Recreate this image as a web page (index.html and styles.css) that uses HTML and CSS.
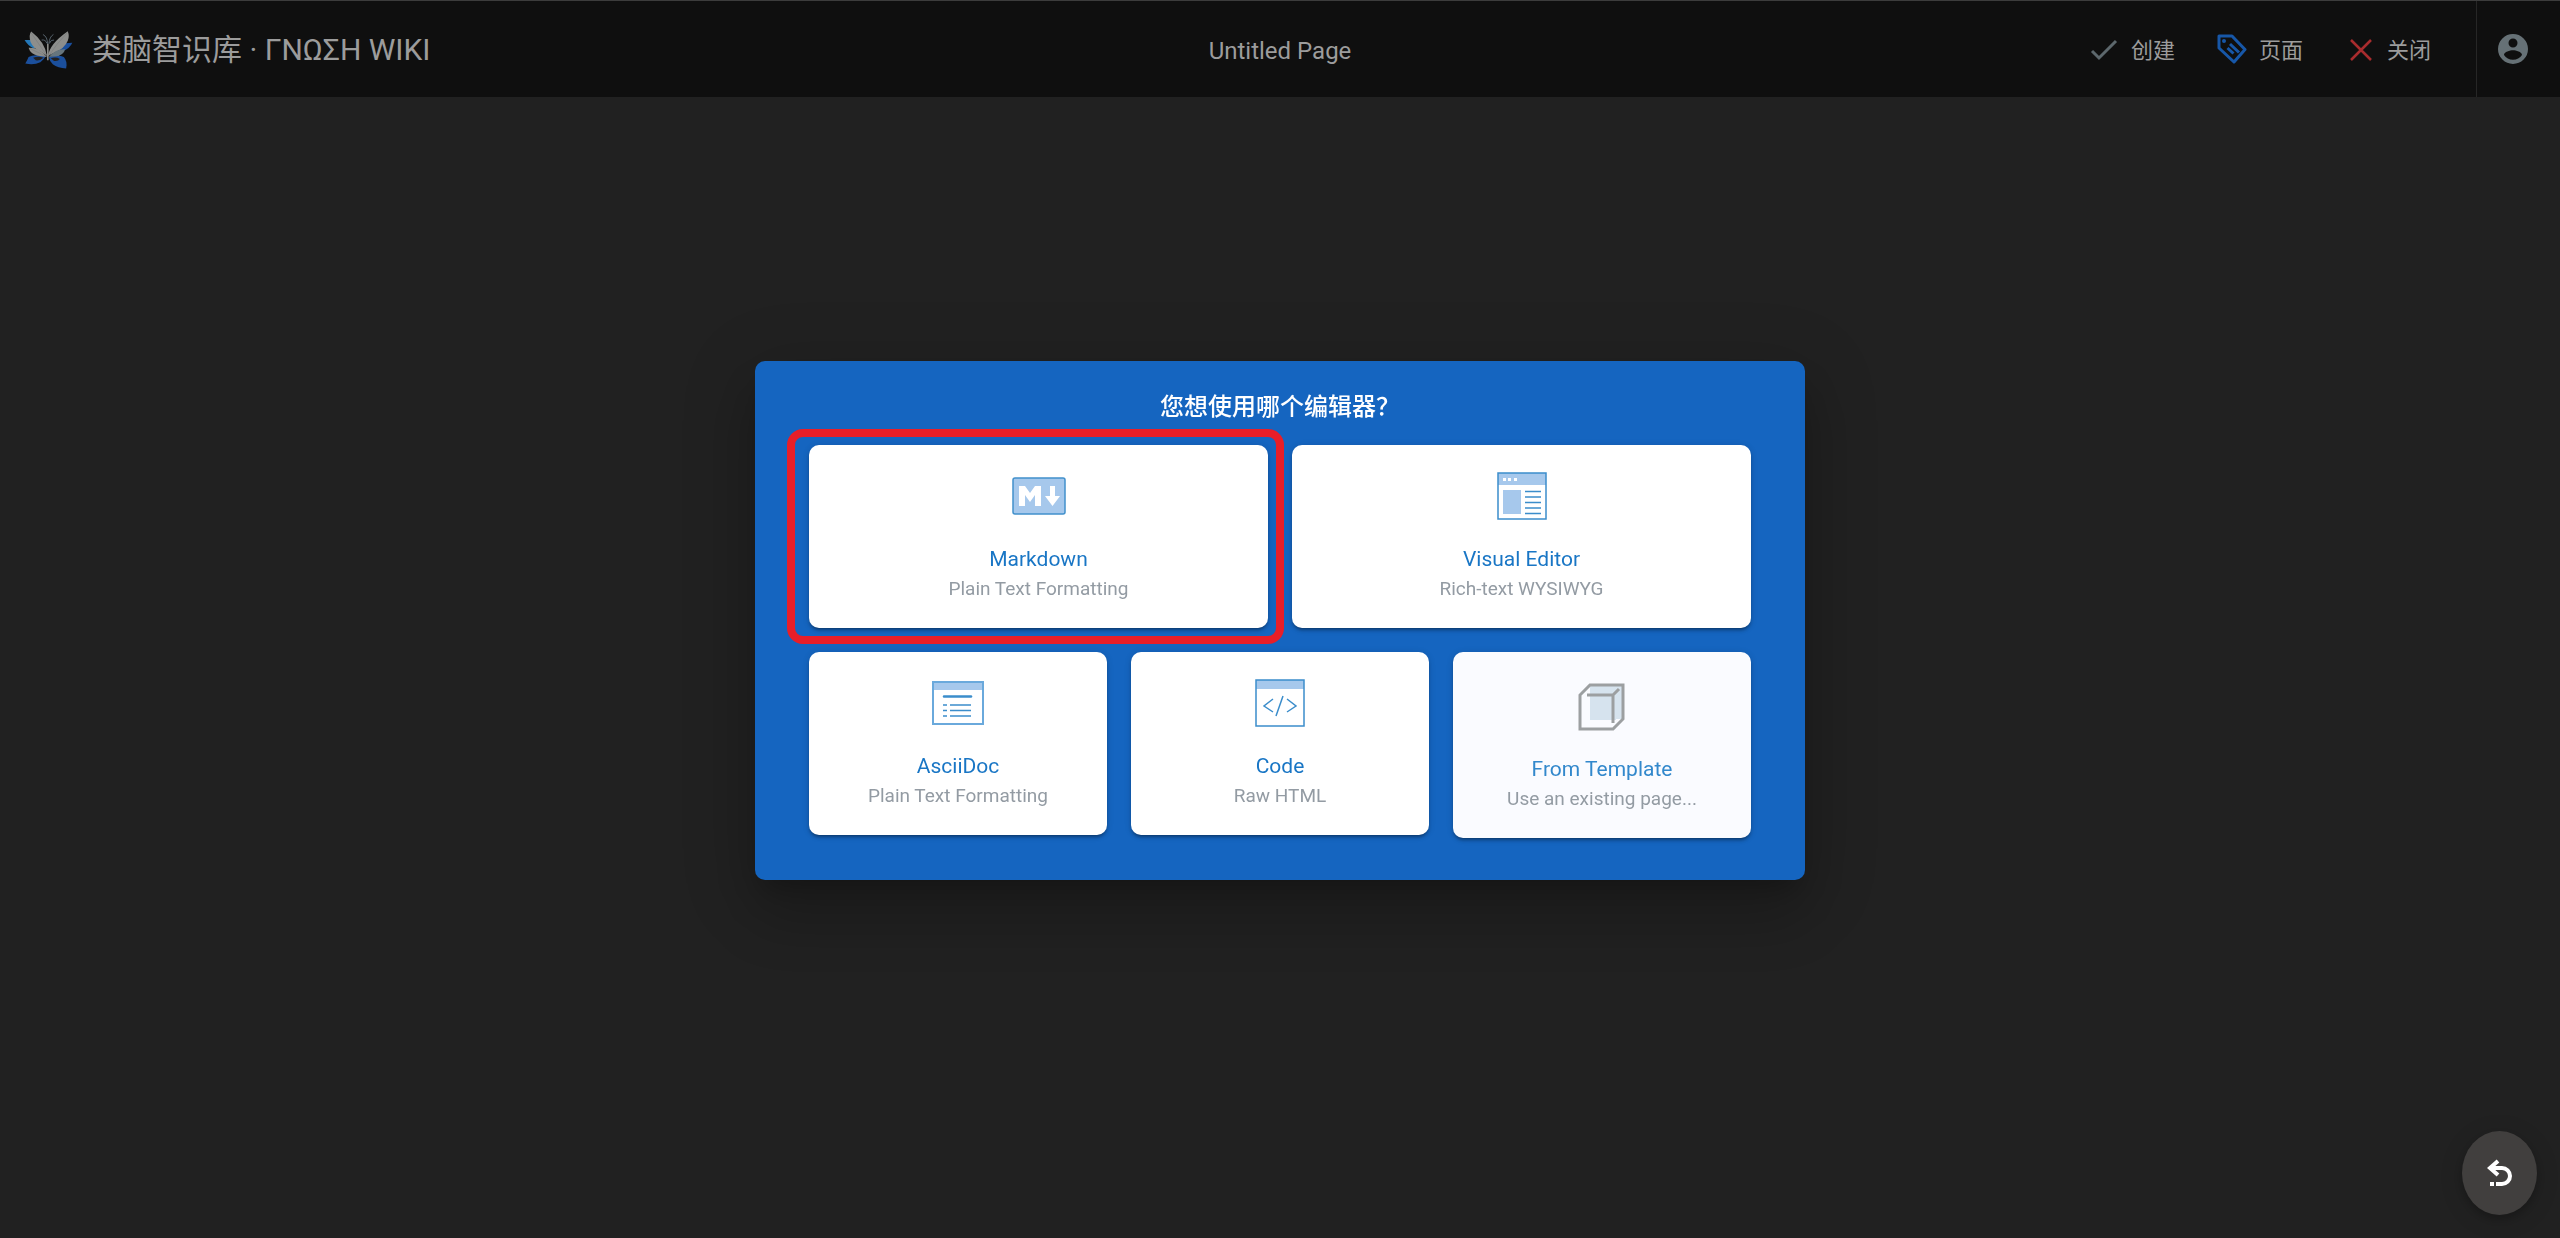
FILE: index.html
```html
<!DOCTYPE html>
<html lang="zh-CN">
<head>
<meta charset="utf-8">
<meta name="viewport" content="width=device-width, initial-scale=1">
<title>Untitled Page</title>
<link rel="stylesheet" href="styles.css">
</head>
<body>
<header class="topbar">
  <a class="brand" href="#">
    <svg class="brand-logo" viewBox="0 0 150 118" aria-hidden="true">
      <g fill="#1b4f9c">
        <path d="M2 30 L24 30 L44 52 L30 56 Q10 46 2 30Z" fill="#2478b8"/>
        <path d="M148 38 L126 40 L102 60 L118 64 Q140 56 148 38Z"/>
        <path d="M66 80 Q30 72 14 82 Q10 92 4 102 Q30 108 50 98 Q62 90 66 80Z"/>
        <path d="M76 82 Q106 74 122 82 Q134 96 129 117 Q104 116 88 104 Q78 94 76 82Z"/>
      </g>
      <g fill="#22201f"><path d="M28 84 Q44 78 60 84 Q48 94 36 92Z"/><path d="M82 86 Q98 80 110 88 Q104 96 92 94Z"/></g>
      <g fill="#8d8e8c">
        <path d="M70 78 Q64 36 22 4 Q14 14 20 36 Q30 58 52 66Z"/>
        <path d="M74 78 Q78 42 134 3 Q140 18 134 32 Q124 56 94 68Z"/>
        <path d="M70 82 Q46 52 14 54 Q20 74 42 78Z"/>
        <path d="M76 82 Q96 56 126 58 Q122 74 100 80Z" fill="#66757d"/>
      </g>
      <path d="M22 8 Q44 40 70 78 M132 8 Q96 46 76 78 M18 56 L68 80" fill="none" stroke="#7b7d7c" stroke-width="2"/>
      <path d="M72 42 Q72 20 58 13 M76 42 Q78 20 90 13 M70 40 Q66 28 54 30 M78 40 Q82 28 92 30" fill="none" stroke="#56626c" stroke-width="3"/>
      <path d="M73 42 V92" stroke="#a9aaa6" stroke-width="4"/>
    </svg>
    <span class="brand-name">类脑智识库 · ΓΝΩΣΗ WIKI</span>
  </a>
  <h1 class="page-name">Untitled Page</h1>
  <div class="tools">
    <div class="actions">
      <button class="action" type="button">
        <svg class="action-icon" viewBox="0 0 30 30" fill="none" stroke="#5d686d" stroke-width="3" aria-hidden="true"><path d="M3 17l7 7L27 7"/></svg>
        <span>创建</span>
      </button>
      <button class="action" type="button">
        <svg class="action-icon" viewBox="0 0 30 30" fill="none" stroke="#1757a8" stroke-width="3" stroke-linejoin="round" aria-hidden="true"><path d="M2 2h13l13 13.500L17 28 2 14Z"/><path d="M13 10l9 8.500M10.500 14l6 5.500"/><circle cx="7" cy="7" r="2" fill="#1757a8" stroke="none"/></svg>
        <span>页面</span>
      </button>
      <button class="action" type="button">
        <svg class="action-icon" viewBox="0 0 30 30" fill="none" stroke="#a82c2e" stroke-width="2.500" aria-hidden="true"><path d="M6 6l20 20M26 6L6 26"/></svg>
        <span>关闭</span>
      </button>
    </div>
    <button class="account" type="button" aria-label="Account">
      <svg class="action-icon" viewBox="2 2 20 20" fill="#667176" aria-hidden="true"><path d="M12 19.200c-2.500 0-4.710-1.280-6-3.200.03-2 4-3.100 6-3.100s5.970 1.100 6 3.100a7.232 7.232 0 0 1-6 3.200M12 5a3 3 0 0 1 3 3 3 3 0 0 1-3 3 3 3 0 0 1-3-3 3 3 0 0 1 3-3m0-3A10 10 0 0 0 2 12a10 10 0 0 0 10 10 10 10 0 0 0 10-10A10 10 0 0 0 12 2Z"/></svg>
    </button>
  </div>
</header>

<main class="overlay">
  <section class="dialog" role="dialog" aria-labelledby="dialog-title">
    <h2 class="dialog-title" id="dialog-title">您想使用哪个编辑器？</h2>
    <div class="row">
      <button class="card card-marked" type="button">
        <span class="card-icon">
          <svg width="54" height="38" viewBox="0 0 54 38" aria-hidden="true"><rect x="1" y="1" width="52" height="36" rx="2" fill="#a6c8ec" stroke="#4190cb" stroke-width="1.500"/><path d="M7 29V9h6l5 7 5-7h6v20h-6V18l-5 7-5-7v11ZM38 9h5v10h5l-7.500 10L33 19h5Z" fill="#fff"/></svg>
        </span>
        <span class="card-name">Markdown</span>
        <span class="card-note">Plain Text Formatting</span>
      </button>
      <button class="card" type="button">
        <span class="card-icon">
          <svg width="50" height="48" viewBox="0 0 50 48" aria-hidden="true"><rect x="1" y="1" width="48" height="46" fill="#fff"/><path d="M1 1h48v12H1ZM6 18h18v24H6Z" fill="#a6c8ec"/><rect x="1" y="1" width="48" height="46" fill="none" stroke="#3b8dcb" stroke-width="1.500"/><path d="M6 6h3v3H6ZM11 6h3v3h-3ZM17 6h3v3h-3Z" fill="#fff"/><path d="M28 19.500h16M28 25h16M28 30.500h16M28 36h16M28 41.500h16" stroke="#3b8dcb" stroke-width="1.500"/></svg>
        </span>
        <span class="card-name">Visual Editor</span>
        <span class="card-note">Rich-text WYSIWYG</span>
      </button>
    </div>
    <div class="row">
      <button class="card" type="button">
        <span class="card-icon">
          <svg width="52" height="44" viewBox="0 0 52 44" aria-hidden="true"><path d="M1 1h50v8H1Z" fill="#a6c8ec"/><rect x="1" y="1" width="50" height="42" fill="none" stroke="#6aa9dc" stroke-width="2"/><path d="M12 15.500h27" stroke="#3b8dcb" stroke-width="2.500" stroke-linecap="round"/><path d="M11 24h4M18 24h21M11 29.500h4M18 29.500h21M11 35h4M18 35h21" stroke="#3b8dcb" stroke-width="1.500"/></svg>
        </span>
        <span class="card-name">AsciiDoc</span>
        <span class="card-note">Plain Text Formatting</span>
      </button>
      <button class="card" type="button">
        <span class="card-icon">
          <svg width="50" height="48" viewBox="0 0 50 48" aria-hidden="true"><path d="M1 1h48v9H1Z" fill="#a6c8ec"/><rect x="1" y="1" width="48" height="46" fill="none" stroke="#3b8dcb" stroke-width="1.500"/><path d="M18 20l-9 7 9 6M32 20l9 7-9 6M28 17l-7 20" fill="none" stroke="#3b8dcb" stroke-width="1.500"/></svg>
        </span>
        <span class="card-name">Code</span>
        <span class="card-note">Raw HTML</span>
      </button>
      <button class="card card-template" type="button">
        <span class="card-icon">
          <svg width="48" height="48" viewBox="0 0 48 48" aria-hidden="true"><path d="M12 2h34v34h-8v1H12Z" fill="#d6e3ee"/><path d="M12 2h33v34L35 46H2V12Z M9 12h26v28M35 12l6-6" fill="none" stroke="#9c9fa1" stroke-width="3"/></svg>
        </span>
        <span class="card-name">From Template</span>
        <span class="card-note">Use an existing page...</span>
      </button>
    </div>
  </section>
</main>

<button class="fab" type="button" aria-label="Back">
  <svg width="26" height="28" viewBox="0 0 26 28" fill="none" stroke="#fff" stroke-width="4" aria-hidden="true"><path d="M11 2L3 9l8 7M3 9h12a8 8 0 0 1 0 16H9"/><path d="M3 23h4v4H3Z" fill="#fff" stroke="none"/></svg>
</button>
</body>
</html>
```
FILE: styles.css
```css
* {
  box-sizing: border-box;
}

body {
  margin: 0;
  min-height: 100vh;
  background: #212121;
  color: #9c9c9c;
  font-family: Roboto, "Noto Sans CJK SC", sans-serif;
}

button {
  border: 0;
  padding: 0;
  background: none;
  color: inherit;
  font: inherit;
  cursor: pointer;
}

svg {
  display: block;
  flex: none;
}

/* Top bar */

.topbar {
  display: grid;
  grid-template-columns: 1fr auto 1fr;
  align-items: center;
  height: 97px;
  border-top: 1px solid #3c3c3c;
  background: #0f0f0f;
}

.brand {
  display: flex;
  align-items: center;
  gap: 19px;
  padding-left: 24px;
  color: inherit;
  text-decoration: none;
}

.brand-logo {
  width: 49px;
  height: 39px;
}

.brand-name {
  padding-top: 2px;
  font-size: 30px;
  line-height: 40px;
  white-space: nowrap;
}

.page-name {
  margin: 0;
  padding-top: 3px;
  font-size: 24px;
  font-weight: 400;
  line-height: 40px;
}

.tools {
  display: flex;
  justify-content: flex-end;
  align-self: stretch;
}

.actions {
  display: flex;
  padding-right: 24px;
}

.action {
  display: flex;
  align-items: center;
  gap: 12px;
  padding: 0 21px;
  font-size: 22px;
  line-height: 30px;
}

.action-icon {
  width: 30px;
  height: 30px;
}

.action span {
  padding-top: 4px;
}

.account {
  padding: 0 32px 0 21px;
  border-left: 1px solid #262626;
}

/* Editor selection dialog */

.overlay {
  position: fixed;
  inset: 0;
  display: flex;
  align-items: center;
  justify-content: center;
  padding-top: 2px;
  pointer-events: none;
}

.dialog {
  width: 100%;
  max-width: 1050px;
  padding: 26px 54px 42px;
  border-radius: 10px;
  background: #1565c0;
  box-shadow: 0 16px 22px -10px rgba(0, 0, 0, .2), 0 36px 57px 4px rgba(0, 0, 0, .14), 0 14px 69px 12px rgba(0, 0, 0, .12);
  pointer-events: auto;
}

.dialog-title {
  margin: 0 0 18px;
  color: #fff;
  font-size: 24px;
  font-weight: 500;
  line-height: 40px;
  text-align: center;
}

.row {
  display: flex;
  align-items: flex-start;
  gap: 24px;
}

.row + .row {
  margin-top: 24px;
}

.card {
  position: relative;
  display: flex;
  flex: 1 1 0;
  flex-direction: column;
  align-items: center;
  padding: 24px 0;
  border-radius: 10px;
  background: #fff;
  box-shadow: 0 4px 2px -3px rgba(0, 0, 0, .2), 0 3px 3px rgba(0, 0, 0, .18), 0 1px 7px rgba(0, 0, 0, .14);
  line-height: 30px;
}

.card-icon {
  display: flex;
  align-items: center;
  height: 54px;
  margin-bottom: 21px;
}

.card-name {
  color: #1976c5;
  font-size: 21px;
}

.card-note {
  color: #939ba3;
  font-size: 19px;
}

.card-template {
  background: #fafbff;
}

.card-template .card-icon {
  height: 62px;
  margin-bottom: 16px;
}

.card-template .card-name {
  color: #3288cc;
}

/* Highlight ring drawn around the card */
.card-marked::after {
  content: "";
  position: absolute;
  inset: -16px -16px -16px -22px;
  border: 8px solid #e81e28;
  border-radius: 16px;
  pointer-events: none;
}

/* Floating button */

.fab {
  position: fixed;
  right: 23px;
  bottom: 23px;
  display: flex;
  align-items: center;
  justify-content: center;
  width: 75px;
  height: 84px;
  border-radius: 50%;
  background: #413f3e;
  box-shadow: 0 4px 8px rgba(0, 0, 0, .2), 0 4px 24px rgba(0, 0, 0, .14);
}
```
